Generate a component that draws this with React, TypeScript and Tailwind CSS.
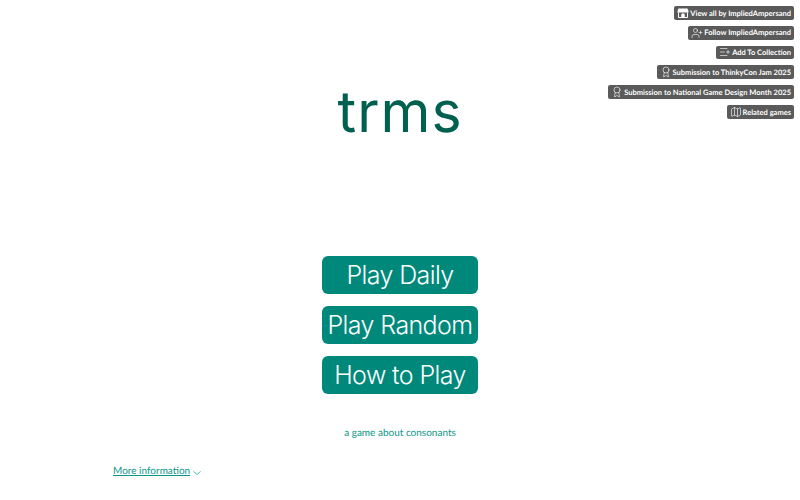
import { Award, ListPlus, Map, UserPlus } from 'lucide-react'

function StoreIcon({ size }: { size: number }) {
  return (
    <svg width={size} height={size} viewBox="0 0 12 12" fill="none">
      <path d="M1.5 1.5h9l1 2.5v1.5H.5V4z" fill="currentColor" />
      <path d="M1.5 5.5v5h9v-5" stroke="currentColor" strokeWidth="1" />
      <path d="M4.2 10.5V8a1.8 1.8 0 0 1 3.6 0v2.5" fill="currentColor" />
    </svg>
  )
}

const links = [
  { label: 'View all by ImpliedAmpersand', icon: StoreIcon },
  { label: 'Follow ImpliedAmpersand', icon: UserPlus },
  { label: 'Add To Collection', icon: ListPlus },
  { label: 'Submission to ThinkyCon Jam 2025', icon: Award },
  { label: 'Submission to National Game Design Month 2025', icon: Award },
  { label: 'Related games', icon: Map },
]

const buttons = ['Play Daily', 'Play Random', 'How to Play']

export default function App() {
  return (
    <div className="relative flex h-[500px] w-[800px] flex-col items-center overflow-hidden bg-white font-['Lato',sans-serif] [text-rendering:geometricPrecision]">
      <div className="absolute right-[6px] top-[6px] flex flex-col items-end gap-[6px]">
        {links.map(({ label, icon: Icon }) => (
          <div
            key={label}
            className="flex h-[13.8px] items-center rounded-[2px] bg-[#5a5a5a] px-[3px] text-[7.5px] font-bold leading-none text-white"
          >
            <Icon size={12} strokeWidth={1.25} />
            <span className="ml-[1px] mt-[1px]">{label}</span>
          </div>
        ))}
      </div>

      <h1 className="mt-[78px] h-[68px] font-['Inter',sans-serif] text-[57px] font-[420] leading-[68px] tracking-[1px] text-[#00604f]">
        trms
      </h1>

      <div className="mt-[110px] flex flex-col gap-[12px]">
        {buttons.map((label) => (
          <button
            key={label}
            className="flex h-[38px] w-[156px] items-center justify-center whitespace-nowrap rounded-[6px] bg-[#00897b] font-['Inter',sans-serif] text-[25px] font-[350] leading-none tracking-[-0.6px] text-white"
          >
            {label}
          </button>
        ))}
      </div>

      <p className="mt-[32px] text-[10px] leading-[14px] text-[#0b9688]">a game about consonants</p>

      <div className="mt-[24px] flex w-[574px] items-center gap-[3px] text-[10px] leading-[14px] text-[#0b9688]">
        <span className="underline">More information</span>
        <svg width="8" height="6" viewBox="0 0 8 6" fill="none" className="mt-[3px]">
          <path d="M.5 1.5 4 4.5l3.5-3" stroke="currentColor" strokeWidth=".7" />
        </svg>
      </div>
    </div>
  )
}
